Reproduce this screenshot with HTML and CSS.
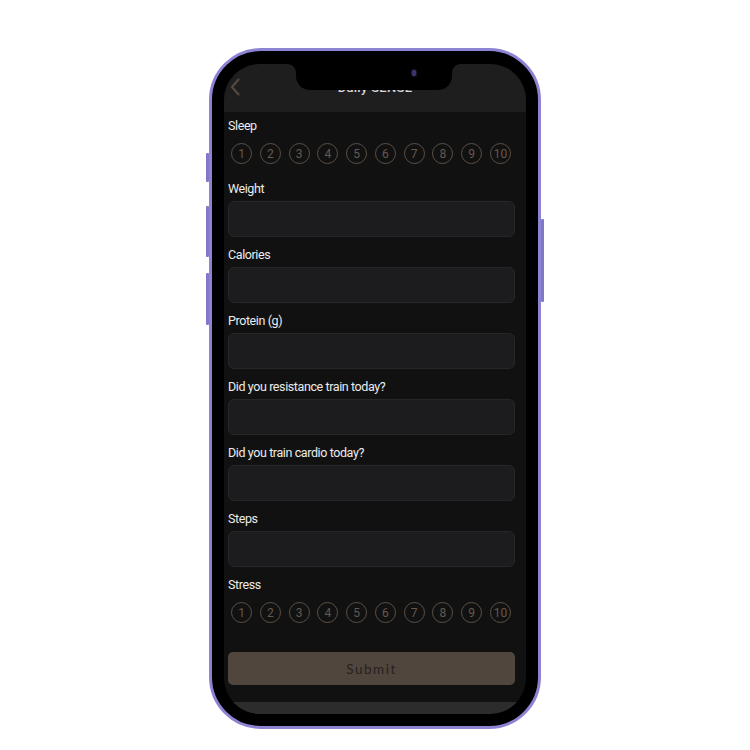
FILE: index.html
```html
<!DOCTYPE html>
<html>
<head>
<meta charset="utf-8">
<link rel="stylesheet" href="styles.css">
</head>
<body>
<div class="stage">
  <div class="phone">
    <span class="btn btn-l1"></span>
    <span class="btn btn-l2"></span>
    <span class="btn btn-l3"></span>
    <span class="btn btn-r1"></span>
    <div class="screen">
      <div class="notch"><span class="cam"></span></div>
      <div class="header">
        <svg class="back" width="10" height="18" viewBox="0 0 10 18"><path d="M8.5 1.5 L2 9 L8.5 16.5" fill="none" stroke="#56483c" stroke-width="2.2" stroke-linecap="round" stroke-linejoin="round"/></svg>
        <div class="title">Daily SENSE</div>
      </div>
      <div class="content">
        <div class="label">Sleep</div>
        <div class="scale">
          <span class="dot">1</span><span class="dot">2</span><span class="dot">3</span><span class="dot">4</span><span class="dot">5</span><span class="dot">6</span><span class="dot">7</span><span class="dot">8</span><span class="dot">9</span><span class="dot">10</span>
        </div>
        <div class="field"><div class="label">Weight</div><div class="input"></div></div>
        <div class="field"><div class="label">Calories</div><div class="input"></div></div>
        <div class="field"><div class="label">Protein (g)</div><div class="input"></div></div>
        <div class="field"><div class="label">Did you resistance train today?</div><div class="input"></div></div>
        <div class="field"><div class="label">Did you train cardio today?</div><div class="input"></div></div>
        <div class="field"><div class="label">Steps</div><div class="input"></div></div>
        <div class="label">Stress</div>
        <div class="scale">
          <span class="dot">1</span><span class="dot">2</span><span class="dot">3</span><span class="dot">4</span><span class="dot">5</span><span class="dot">6</span><span class="dot">7</span><span class="dot">8</span><span class="dot">9</span><span class="dot">10</span>
        </div>
        <div class="submit">Submit</div>
      </div>
      <div class="tabbar"></div>
    </div>
  </div>
</div>
</body>
</html>
```
FILE: styles.css
```css
html, body {
  margin: 0;
  padding: 0;
  background: #ffffff;
}
.stage {
  width: 750px;
  height: 750px;
  display: flex;
  justify-content: center;
  padding-top: 48px;
  box-sizing: border-box;
  font-family: Roboto, "Liberation Sans", sans-serif;
}
.phone {
  position: relative;
  width: 332px;
  height: 681px;
  box-sizing: border-box;
  border: 3px solid #8d83d3;
  border-radius: 52px;
  background: #000;
  padding: 13px 12px 12px 12px;
}
.btn {
  position: absolute;
  width: 3px;
  background: #8277c9;
  border-radius: 1px;
}
.btn-l1 { left: -6px; top: 102px; height: 29px; }
.btn-l2 { left: -6px; top: 155px; height: 51px; }
.btn-l3 { left: -6px; top: 222px; height: 52px; }
.btn-r1 { right: -6px; top: 168px; height: 83px; }
.screen {
  position: relative;
  width: 302px;
  height: 650px;
  border-radius: 36px;
  overflow: hidden;
  background: #111111;
  display: flex;
  flex-direction: column;
}
.notch {
  position: absolute;
  top: 0;
  left: 72px;
  width: 156px;
  height: 26px;
  background: #000;
  border-radius: 0 0 14px 14px;
  z-index: 2;
}
.notch::before, .notch::after {
  content: "";
  position: absolute;
  top: 0;
  width: 8px;
  height: 8px;
}
.notch::before {
  left: -8px;
  background: radial-gradient(circle at 0 100%, transparent 7.5px, #000 8px);
}
.notch::after {
  right: -8px;
  background: radial-gradient(circle at 100% 100%, transparent 7.5px, #000 8px);
}
.cam {
  position: absolute;
  left: 116px;
  top: 6px;
  width: 4px;
  height: 6px;
  border-radius: 50%;
  background: #3a3470;
  box-shadow: 0 0 2px #6a62b8;
}
.header {
  position: relative;
  height: 48px;
  flex: none;
  background: #1e1e1f;
}
.back {
  position: absolute;
  left: 6px;
  top: 14px;
}
.title {
  position: absolute;
  left: 0;
  right: 0;
  top: 16px;
  text-align: center;
  font-size: 13px;
  font-weight: 500;
  color: #d8d8d8;
  letter-spacing: 0.3px;
}
.content {
  flex: 1;
  padding: 6px 0 0 4px;
  width: 287px;
}
.label {
  font-size: 12.5px;
  line-height: 16px;
  color: #ececec;
  letter-spacing: -0.4px;
}
.scale {
  display: flex;
  justify-content: space-between;
  padding: 0 4px 0 3px;
  margin: 9px 0 17px 0;
}
.dot {
  width: 21px;
  height: 21px;
  box-sizing: border-box;
  border: 1.5px solid #5c5046;
  border-radius: 50%;
  display: flex;
  align-items: center;
  justify-content: center;
  font-size: 12px;
  color: #66594e;
}
.field {
  margin-bottom: 10px;
}
.input {
  margin-top: 4px;
  height: 36px;
  box-sizing: border-box;
  background: #1c1c1e;
  border: 1px solid #27272a;
  border-radius: 6px;
}
.submit {
  margin-top: 29px;
  height: 33px;
  border-radius: 5px;
  background: #50463e;
  display: flex;
  align-items: center;
  justify-content: center;
  font-family: Lato, "Open Sans", sans-serif;
  font-size: 13.5px;
  letter-spacing: 1.5px;
  color: #26211d;
}
.tabbar {
  flex: none;
  height: 12px;
  background: #2c2c2c;
  border-radius: 8px 8px 0 0;
}
```
